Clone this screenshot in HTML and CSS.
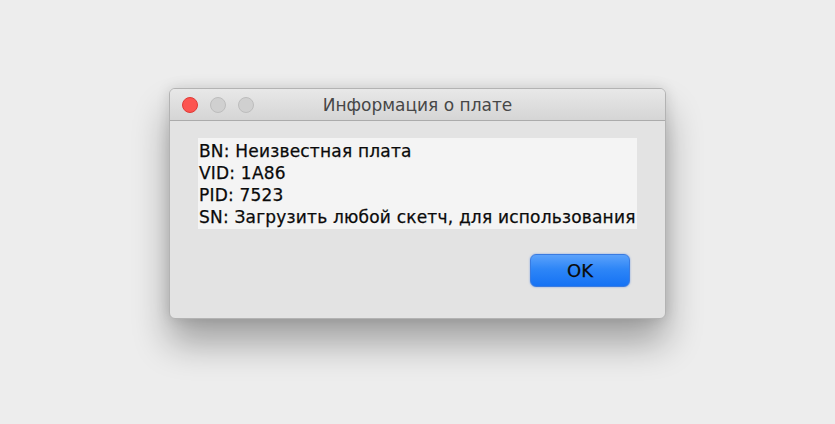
FILE: index.html
```html
<!DOCTYPE html>
<html lang="ru">
<head>
<meta charset="utf-8">
<title>Информация о плате</title>
<link rel="stylesheet" href="styles.css">
</head>
<body>
<div class="stage">
  <div class="window">
    <div class="titlebar">
      <div class="lights">
        <span class="light red"></span>
        <span class="light gray"></span>
        <span class="light gray"></span>
      </div>
      <div class="title">Информация о плате</div>
    </div>
    <div class="content">
      <div class="info">
        <div class="line">BN: Неизвестная плата</div>
        <div class="line">VID: 1A86</div>
        <div class="line">PID: 7523</div>
        <div class="line">SN: Загрузить любой скетч, для использования</div>
      </div>
      <div class="actions">
        <button class="ok">OK</button>
      </div>
    </div>
  </div>
</div>
</body>
</html>
```

FILE: styles.css
```css
html, body {
  margin: 0;
  padding: 0;
}
body {
  background: #ededed;
  width: 835px;
  height: 424px;
  overflow: hidden;
  font-family: "DejaVu Sans", "Liberation Sans", sans-serif;
}
.stage {
  padding: 88px 0 0 169px;
}
.window {
  width: 497px;
  height: 231px;
  box-sizing: border-box;
  background: #e3e3e3;
  border: 1px solid #b3b3b3;
  border-radius: 6px;
  box-shadow: 0 24px 36px rgba(0,0,0,0.32), 0 0 14px rgba(0,0,0,0.12);
  display: flex;
  flex-direction: column;
  overflow: hidden;
}
.titlebar {
  height: 31px;
  flex: none;
  background: linear-gradient(#e8e8e8, #d5d5d5);
  border-bottom: 1px solid #ababab;
  position: relative;
  display: flex;
  align-items: center;
}
.lights {
  display: flex;
  gap: 12px;
  padding-left: 12px;
}
.light {
  width: 16px;
  height: 16px;
  border-radius: 50%;
  box-sizing: border-box;
}
.red {
  background: #fc5450;
  border: 1px solid #df3b36;
}
.gray {
  background: #d0d0d0;
  border: 1px solid #bdbdbd;
}
.title {
  position: absolute;
  left: 0;
  right: 0;
  top: 0;
  bottom: 0;
  display: flex;
  align-items: center;
  justify-content: center;
  font-size: 17px;
  color: #474747;
  pointer-events: none;
}
.content {
  padding: 17px 29px 0 28px;
  display: flex;
  flex-direction: column;
}
.info {
  background: #f4f4f4;
  align-self: flex-start;
  padding: 2px 1px 1px 1px;
}
.line {
  font-size: 17px;
  line-height: 22px;
  letter-spacing: 0.2px;
  color: #0a0a0a;
  -webkit-text-stroke: 0.25px #0a0a0a;
  white-space: nowrap;
}
.actions {
  display: flex;
  justify-content: flex-end;
  padding-top: 25px;
  padding-right: 6px;
}
.ok {
  width: 100px;
  height: 33px;
  border: 1px solid #3a7be0;
  border-radius: 6px;
  background: linear-gradient(#5ba2fb, #2e86f7 45%, #1572f4);
  box-shadow: 0 0 2px rgba(40,110,230,0.6);
  font-family: "DejaVu Sans", "Liberation Sans", sans-serif;
  font-size: 18px;
  color: #0a0a0a;
  -webkit-text-stroke: 0.25px #0a0a0a;
  padding: 0;
}
```
